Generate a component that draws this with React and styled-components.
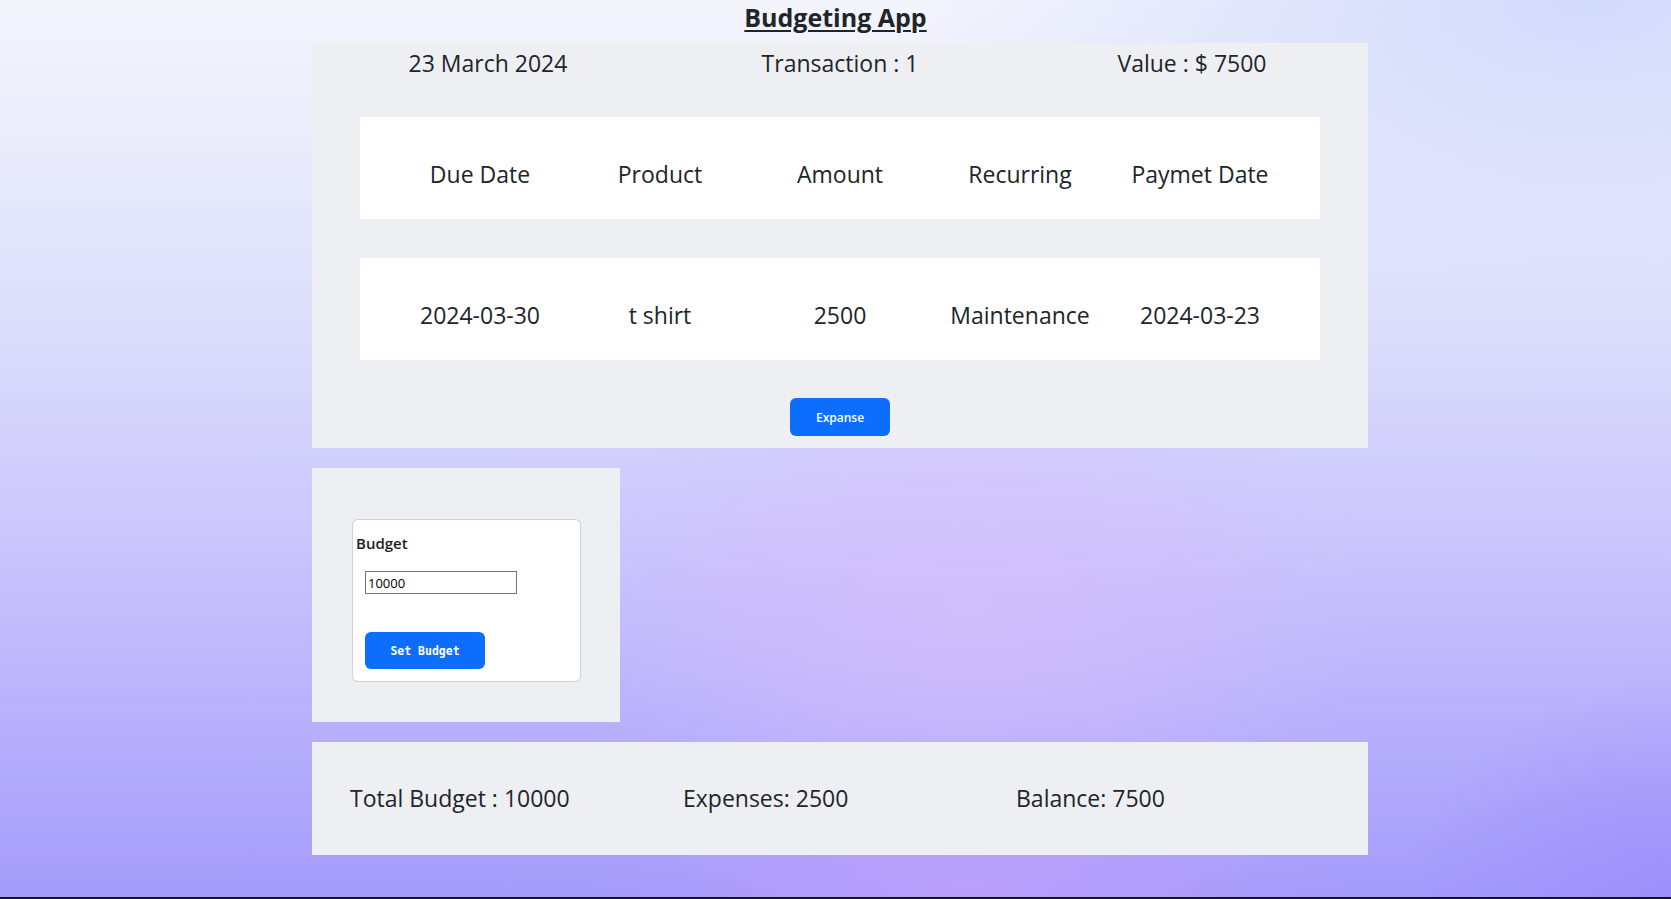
import React from "react";
import styled, { createGlobalStyle } from "styled-components";

const GlobalStyle = createGlobalStyle`
  html { background: #151515; }
  body { margin: 0; font-family: "Open Sans", "Noto Sans", sans-serif; color: #212529; }
  * { box-sizing: border-box; }
`;

const Page = styled.div`
  height: 897px;
  overflow: hidden;
  display: flex;
  flex-direction: column;
  align-items: flex-start;
  background:
    radial-gradient(ellipse 35% 40% at 58% 68%, rgba(214, 190, 252, 0.75), transparent 70%),
    radial-gradient(ellipse 30% 25% at 58% 100%, rgba(190, 160, 252, 0.8), transparent 75%),
    radial-gradient(ellipse 20% 30% at 100% 100%, rgba(150, 135, 250, 0.6), transparent 80%),
    radial-gradient(ellipse 55% 45% at 95% 0%, rgba(208, 216, 251, 0.95), transparent 75%),
    linear-gradient(180deg, #f4f5fc 0%, #e0e3fb 30%, #c9c4fc 62%, #a59bfb 100%);
`;

const Header = styled.header`
  width: 100%;
  height: 43px;
  display: flex;
  justify-content: center;
`;

const Title = styled.h1`
  margin: 0;
  font-size: 25px;
  line-height: 34px;
  font-weight: 700;
  text-decoration: underline;
  text-underline-offset: 3px;
  text-decoration-thickness: 2px;
  color: #212529;
`;

const Content = styled.main`
  margin-left: 312px;
  width: 1056px;
  display: flex;
  flex-direction: column;
  align-items: flex-start;
  gap: 20px;
`;

const Panel = styled.section`
  background: #eeeff3;
  width: ${(p) => p.$width || "100%"};
`;

const MainPanel = styled(Panel)`
  display: flex;
  flex-direction: column;
  align-items: center;
  padding: 0 0 12px;
`;

const InfoRow = styled.div`
  width: 100%;
  height: 40px;
  display: grid;
  grid-template-columns: repeat(3, 1fr);
  align-items: center;
  font-size: 23px;
  text-align: center;
`;

const Rows = styled.div`
  margin-top: 34px;
  display: flex;
  flex-direction: column;
  gap: 39px;
`;

const TableRow = styled.div`
  width: 960px;
  height: 102px;
  background: #fff;
  display: grid;
  grid-template-columns: repeat(5, 180px);
  justify-content: center;
  align-items: center;
  padding-top: 12px;
  font-size: 23px;
  text-align: center;
`;

const Cell = styled.div`
  white-space: nowrap;
`;

const BlueButton = styled.button`
  background: #0d6efd;
  color: #fff;
  border: none;
  border-radius: 6px;
  cursor: pointer;
  width: ${(p) => p.$w}px;
  height: ${(p) => p.$h}px;
  font-size: 12px;
  font-weight: 600;
  font-family: "Open Sans", sans-serif;
`;

const ExpanseButton = styled(BlueButton)`
  margin-top: 38px;
`;

const SetButton = styled(BlueButton)`
  font-family: "DejaVu Sans Mono", "Liberation Mono", monospace;
  font-size: 11.5px;
  font-weight: 700;
  margin-top: 38px;
`;

const BudgetPanel = styled(Panel)`
  height: 254px;
  padding: 51px 0 0 40px;
`;

const Card = styled.div`
  width: 229px;
  height: 163px;
  background: #fff;
  border: 1px solid rgba(0, 0, 0, 0.175);
  border-radius: 6px;
  padding: 11px 12px 0 12px;
  display: flex;
  flex-direction: column;
  align-items: flex-start;
`;

const Label = styled.label`
  font-size: 15px;
  font-weight: 600;
  margin-left: -9px;
  line-height: 24px;
  color: #1b1e21;
`;

const Input = styled.input`
  margin-top: 16px;
  width: 152px;
  height: 23px;
  border: 1px solid #767676;
  padding: 1px 2px;
  font-size: 13px;
  font-family: "Open Sans", sans-serif;
  color: #000;
  border-radius: 0;
  outline: none;
`;

const SummaryPanel = styled(Panel)`
  height: 113px;
  display: grid;
  grid-template-columns: repeat(3, 333px);
  align-items: center;
  padding: 0 0 2px 38px;
  font-size: 23px;
`;

const rows = [["2024-03-30", "t shirt", "2500", "Maintenance", "2024-03-23"]];
const headers = ["Due Date", "Product", "Amount", "Recurring", "Paymet Date"];

export default function App() {
  return (
    <>
      <GlobalStyle />
      <Page>
        <Header>
          <Title>Budgeting App</Title>
        </Header>
        <Content>
          <MainPanel>
            <InfoRow>
              <div>23 March 2024</div>
              <div>Transaction : 1</div>
              <div>Value : $ 7500</div>
            </InfoRow>
            <Rows>
              <TableRow>
                {headers.map((h) => (
                  <Cell key={h}>{h}</Cell>
                ))}
              </TableRow>
              {rows.map((r, i) => (
                <TableRow key={i}>
                  {r.map((c, j) => (
                    <Cell key={j}>{c}</Cell>
                  ))}
                </TableRow>
              ))}
            </Rows>
            <ExpanseButton $w={100} $h={38}>Expanse</ExpanseButton>
          </MainPanel>
          <BudgetPanel $width="308px">
            <Card>
              <Label>Budget</Label>
              <Input defaultValue="10000" />
              <SetButton $w={120} $h={37}>Set Budget</SetButton>
            </Card>
          </BudgetPanel>
          <SummaryPanel>
            <div>Total Budget : 10000</div>
            <div>Expenses: 2500</div>
            <div>Balance: 7500</div>
          </SummaryPanel>
        </Content>
      </Page>
    </>
  );
}
